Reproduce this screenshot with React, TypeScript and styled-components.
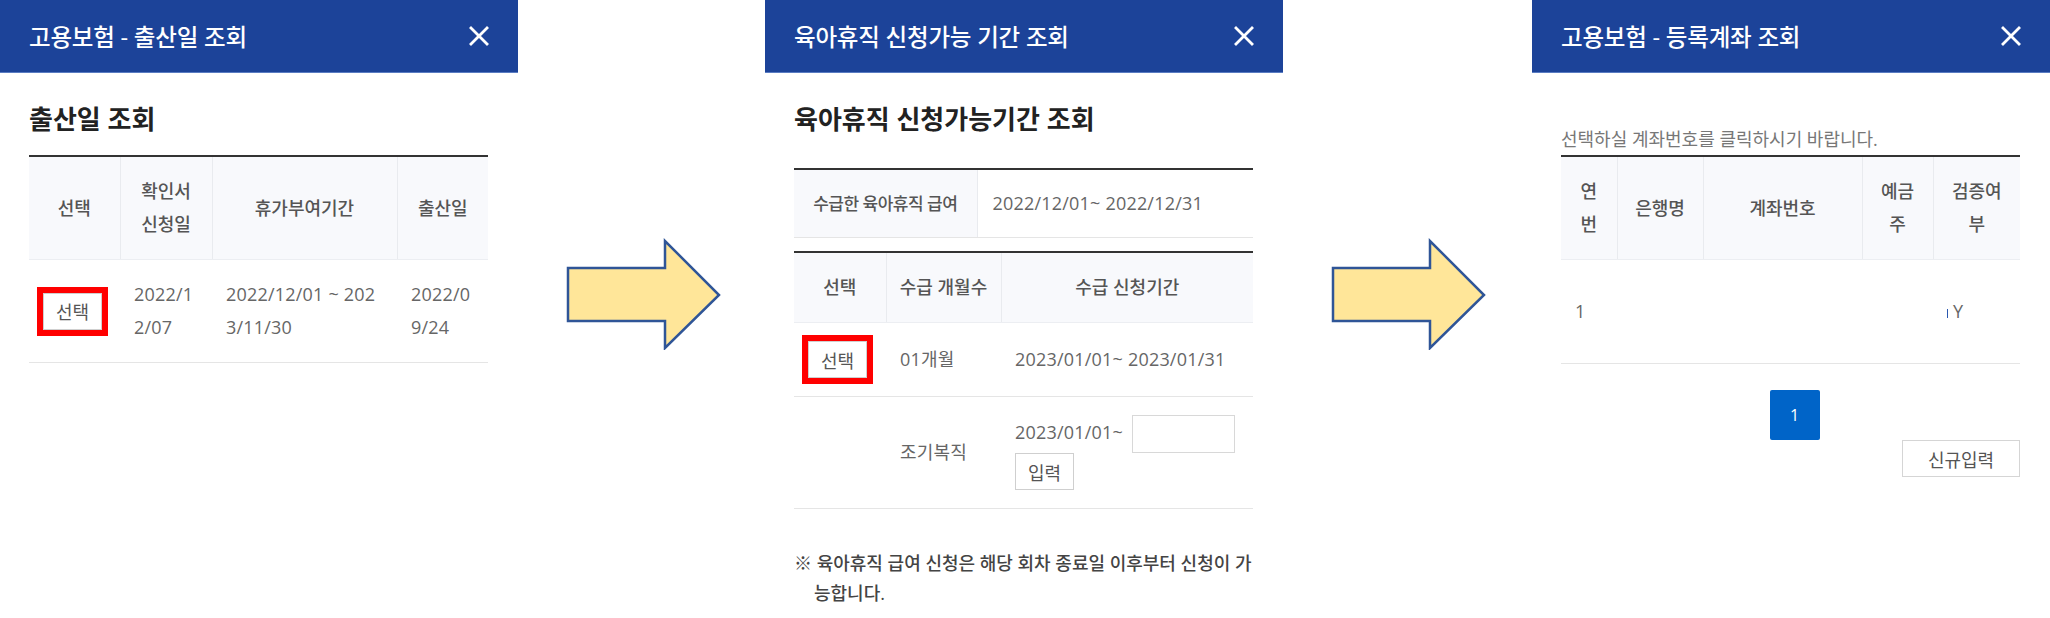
import React from 'react'
import styled, { createGlobalStyle } from 'styled-components'

const GlobalStyle = createGlobalStyle`
  html, body {
    margin: 0;
    padding: 0;
    background: #fff;
  }
  body {
    font-family: "Open Sans", "Noto Sans CJK KR", sans-serif;
    color: #666;
  }
`

const Page = styled.div`
  display: flex;
  align-items: flex-start;
  width: 2050px;
  height: 618px;
  overflow: hidden;
`

const Panel = styled.section`
  width: 518px;
  flex-shrink: 0;
  background: #fff;
`

const PanelHeader = styled.header`
  height: 73px;
  box-sizing: border-box;
  background: #1c4399;
  border-bottom: 1px solid #5a7cc2;
  display: flex;
  align-items: center;
  justify-content: space-between;
  padding: 0 28px 0 29px;
`

const PanelTitle = styled.h2`
  margin: 0;
  color: #fff;
  font-size: 23.5px;
  font-weight: 500;
  letter-spacing: -0.2px;
`

const CloseButton = styled.button`
  border: none;
  background: none;
  padding: 0;
  width: 22px;
  height: 22px;
  display: flex;
  align-items: center;
  justify-content: center;
  cursor: pointer;
`

const Body = styled.div`
  padding: 0 30px 0 29px;
`

const SectionTitle = styled.h3<{ gap: number }>`
  margin: 28px 0 ${props => props.gap}px;
  font-size: 26px;
  line-height: 36px;
  font-weight: 700;
  color: #222;
`

const Guide = styled.p`
  margin: 54px 0 4px;
  font-size: 18px;
  line-height: 24px;
  color: #777;
`

const Table = styled.table<{ gap?: number }>`
  width: 100%;
  border-collapse: collapse;
  table-layout: fixed;
  border-top: 2px solid #333;
  margin-bottom: ${props => props.gap ?? 0}px;
`

const Th = styled.th`
  background: #f8f9fc;
  color: #555;
  font-size: 18px;
  font-weight: 500;
  line-height: 33px;
  padding: 18px 8px;
  text-align: center;
  border-left: 1px solid #e9ebef;
  border-bottom: 1px solid #eceef2;
  white-space: nowrap;
  &:first-child {
    border-left: none;
  }
`

const RowTh = styled(Th)`
  padding: 17px 8px;
  font-size: 17px;
  letter-spacing: -0.5px;
  border-right: 1px solid #e9ebef;
  border-bottom: 1px solid #e5e5e5;
`

const Td = styled.td<{ tall?: boolean }>`
  color: #666;
  font-size: 18px;
  line-height: 33px;
  height: ${props => (props.tall ? '67px' : 'auto')};
  padding: 18px 14px;
  text-align: left;
  vertical-align: middle;
  border-bottom: 1px solid #e5e5e5;
  word-break: break-all;
  letter-spacing: 0.2px;
`

const WideTd = styled(Td)`
  padding: 17px 15px;
`

const SmallButton = styled.button<{ marked?: boolean }>`
  display: inline-block;
  vertical-align: middle;
  height: 37px;
  padding: 0 12px;
  background: #fff;
  border: 1px solid #cfcfcf;
  color: #555;
  font-family: inherit;
  font-size: 18px;
  cursor: pointer;
  outline: ${props => (props.marked ? '6px solid #ff0000' : 'none')};
`

const DateInput = styled.input`
  display: inline-block;
  vertical-align: middle;
  width: 103px;
  height: 38px;
  box-sizing: border-box;
  border: 1px solid #d8d8d8;
  margin-left: 4px;
`

const Note = styled.p`
  margin: 39px 0 0;
  padding-left: 20px;
  text-indent: -20px;
  color: #444;
  font-size: 18px;
  font-weight: 500;
  line-height: 30px;
`

const Pager = styled.div`
  display: flex;
  justify-content: center;
  margin-top: 26px;
  padding-left: 8px;
`

const PageNumber = styled.span<{ active?: boolean }>`
  width: 50px;
  height: 50px;
  border-radius: 2px;
  display: flex;
  align-items: center;
  justify-content: center;
  background: ${props => (props.active ? '#0064c8' : '#fff')};
  color: ${props => (props.active ? '#fff' : '#555')};
  font-size: 16px;
`

const ButtonRow = styled.div`
  display: flex;
  justify-content: flex-end;
`

const WideButton = styled(SmallButton)`
  width: 118px;
  border-color: #d5d5d5;
`

const Cursor = styled.span`
  display: inline-block;
  width: 1px;
  height: 9px;
  background: #2a58b0;
  margin-right: 5px;
  vertical-align: middle;
`

const ArrowSlot = styled.div<{ width: number }>`
  width: ${props => props.width}px;
  flex-shrink: 0;
  padding-top: 238px;
  padding-left: 48px;
  box-sizing: border-box;
`

function CloseIcon() {
  return (
    <svg width="20" height="20" viewBox="0 0 20 20">
      <path d="M2 2 L18 18 M18 2 L2 18" stroke="#fff" strokeWidth="2.8" strokeLinecap="square" />
    </svg>
  )
}

function Arrow() {
  return (
    <svg width="156" height="112" viewBox="0 0 156 112">
      <polygon
        points="2,30 99,30 99,3 153,57 99,110 99,83 2,83"
        fill="#ffe699"
        stroke="#2f5597"
        strokeWidth="2.5"
      />
    </svg>
  )
}

function Header({ title }: { title: string }) {
  return (
    <PanelHeader>
      <PanelTitle>{title}</PanelTitle>
      <CloseButton aria-label="닫기">
        <CloseIcon />
      </CloseButton>
    </PanelHeader>
  )
}

export default function App() {
  return (
    <>
      <GlobalStyle />
      <Page>
        <Panel>
          <Header title="고용보험 - 출산일 조회" />
          <Body>
            <SectionTitle gap={18}>출산일 조회</SectionTitle>
            <Table>
              <colgroup>
                <col style={{ width: 91 }} />
                <col style={{ width: 92 }} />
                <col style={{ width: 185 }} />
                <col />
              </colgroup>
              <thead>
                <tr>
                  <Th>선택</Th>
                  <Th>확인서<br />신청일</Th>
                  <Th>휴가부여기간</Th>
                  <Th>출산일</Th>
                </tr>
              </thead>
              <tbody>
                <tr>
                  <Td><SmallButton marked>선택</SmallButton></Td>
                  <Td>2022/12/07</Td>
                  <Td>2022/12/01 ~ 2023/11/30</Td>
                  <Td>2022/09/24</Td>
                </tr>
              </tbody>
            </Table>
          </Body>
        </Panel>

        <ArrowSlot width={247}>
          <Arrow />
        </ArrowSlot>

        <Panel>
          <Header title="육아휴직 신청가능 기간 조회" />
          <Body>
            <SectionTitle gap={31}>육아휴직 신청가능기간 조회</SectionTitle>
            <Table gap={13}>
              <colgroup>
                <col style={{ width: 183 }} />
                <col />
              </colgroup>
              <tbody>
                <tr>
                  <RowTh>수급한 육아휴직 급여</RowTh>
                  <WideTd>2022/12/01~ 2022/12/31</WideTd>
                </tr>
              </tbody>
            </Table>
            <Table>
              <colgroup>
                <col style={{ width: 92 }} />
                <col style={{ width: 115 }} />
                <col />
              </colgroup>
              <thead>
                <tr>
                  <Th>선택</Th>
                  <Th>수급 개월수</Th>
                  <Th>수급 신청기간</Th>
                </tr>
              </thead>
              <tbody>
                <tr>
                  <Td><SmallButton marked>선택</SmallButton></Td>
                  <Td>01개월</Td>
                  <Td>2023/01/01~ 2023/01/31</Td>
                </tr>
                <tr>
                  <Td />
                  <Td>조기복직</Td>
                  <Td>
                    2023/01/01~ <DateInput type="text" /> <SmallButton>입력</SmallButton>
                  </Td>
                </tr>
              </tbody>
            </Table>
            <Note>※ 육아휴직 급여 신청은 해당 회차 종료일 이후부터 신청이 가능합니다.</Note>
          </Body>
        </Panel>

        <ArrowSlot width={249}>
          <Arrow />
        </ArrowSlot>

        <Panel>
          <Header title="고용보험 - 등록계좌 조회" />
          <Body>
            <Guide>선택하실 계좌번호를 클릭하시기 바랍니다.</Guide>
            <Table>
              <colgroup>
                <col style={{ width: 56 }} />
                <col style={{ width: 86 }} />
                <col style={{ width: 159 }} />
                <col style={{ width: 71 }} />
                <col />
              </colgroup>
              <thead>
                <tr>
                  <Th>연<br />번</Th>
                  <Th>은행명</Th>
                  <Th>계좌번호</Th>
                  <Th>예금<br />주</Th>
                  <Th>검증여<br />부</Th>
                </tr>
              </thead>
              <tbody>
                <tr>
                  <Td tall>1</Td>
                  <Td tall />
                  <Td tall />
                  <Td tall />
                  <Td tall><Cursor />Y</Td>
                </tr>
              </tbody>
            </Table>
            <Pager>
              <PageNumber active>1</PageNumber>
            </Pager>
            <ButtonRow>
              <WideButton>신규입력</WideButton>
            </ButtonRow>
          </Body>
        </Panel>
      </Page>
    </>
  )
}
